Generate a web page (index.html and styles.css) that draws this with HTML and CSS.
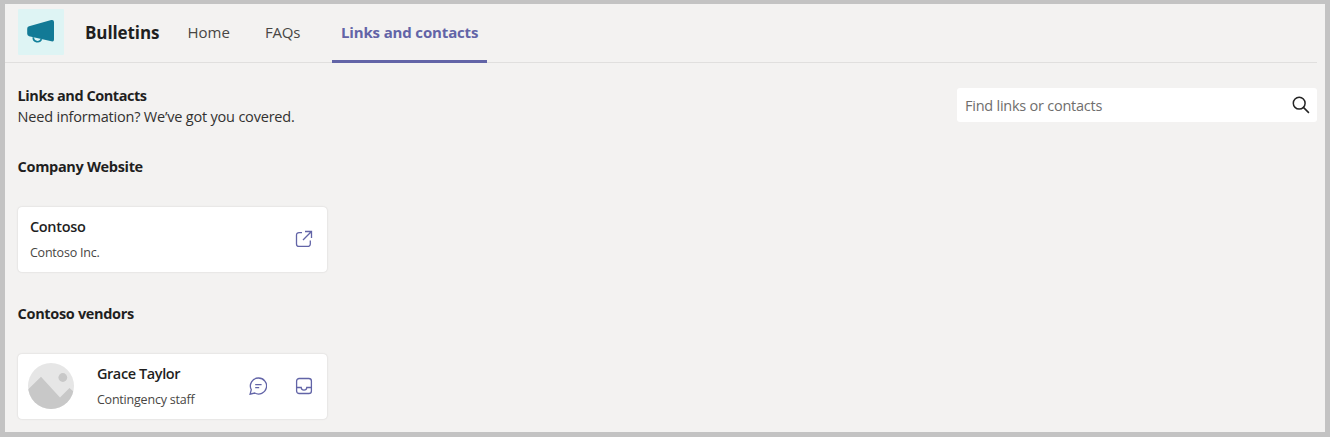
FILE: index.html
```
<!DOCTYPE html>
<html lang="en">
<head>
<meta charset="utf-8">
<title>Bulletins</title>
<link rel="stylesheet" href="styles.css">
</head>
<body>
<div class="app">
  <header class="header">
    <svg class="logo" viewBox="0 0 46 46">
      <rect width="46" height="46" rx="1" fill="#def4f4"/>
      <path d="M15.3 28.200a4.300 4.300 0 0 0 8.200 2" fill="none" stroke="#12809b" stroke-width="1.7"/>
      <path d="M11.100 17.300 33.200 11.100Q36 10.500 36 13V30.600Q36 33 33.400 32.300L11.100 27.200Q9.200 26.700 9.200 24.800V19.700Q9.200 17.800 11.100 17.300Z" fill="#127a96"/>
    </svg>
    <h1 class="brand">Bulletins</h1>
    <nav class="tabs">
      <a class="tab tab-home">Home</a>
      <a class="tab tab-faqs">FAQs</a>
      <a class="tab tab-active"><span>Links and contacts</span></a>
    </nav>
  </header>
  <main class="main">
    <div class="intro">
      <div>
        <h2 class="heading heading-intro">Links and Contacts</h2>
        <p class="lead">Need information? We’ve got you covered.</p>
      </div>
      <div class="search">
        <span class="placeholder">Find links or contacts</span>
        <svg class="search-icon" viewBox="0 0 18 18" fill="none" stroke="#242424" stroke-width="1.5"><circle cx="7.200" cy="7.200" r="5.900"/><path d="m11.400 11.400 5.500 5.500"/></svg>
      </div>
    </div>
    <section class="section">
      <h2 class="heading">Company Website</h2>
      <article class="card">
        <div class="info">
          <h3 class="name name-company">Contoso</h3>
          <p class="detail">Contoso Inc.</p>
        </div>
        <svg class="icon" viewBox="0 0 18 18"><path d="M7 2.600H4A2.500 2.500 0 0 0 1.500 5.100V13.900A2.500 2.500 0 0 0 4 16.400H12.800A2.500 2.500 0 0 0 15.300 13.900V10.500M10 1.500H16.500V8M16.200 1.800 8 10"/></svg>
      </article>
    </section>
    <section class="section">
      <h2 class="heading">Contoso vendors</h2>
      <article class="card">
        <svg class="avatar" viewBox="0 0 46 46">
          <defs><clipPath id="avatar-clip"><circle cx="23" cy="23" r="23"/></clipPath></defs>
          <g clip-path="url(#avatar-clip)">
            <rect width="46" height="46" fill="#e6e6e6"/>
            <path d="M0 26.500 13 13.700 32 34.500 41.500 25 46 29V46H0Z" fill="#c8c8c8"/>
            <circle cx="34.800" cy="14.500" r="4.400" fill="#c8c8c8"/>
          </g>
        </svg>
        <div class="info">
          <h3 class="name">Grace Taylor</h3>
          <p class="detail">Contingency staff</p>
        </div>
        <svg class="icon icon-chat" viewBox="0 0 18 18"><path d="M9.500 1A8 8 0 1 1 5.700 16L1.100 17.200 2.300 12.700A8 8 0 0 1 9.500 1ZM6.200 7.600H12.600M6.200 10.600H10.200"/></svg>
        <svg class="icon" viewBox="0 0 18 18"><rect x="1.600" y="1.500" width="14.800" height="15" rx="2.600"/><path d="M1.800 10.500H6.200C6.500 14 11.500 14 11.800 10.500H16.300"/></svg>
      </article>
    </section>
  </main>
</div>
</body>
</html>
```
FILE: styles.css
```
* { box-sizing: border-box; }
body {
  margin: 0;
  font-family: "Open Sans", "Noto Sans", sans-serif;
  color: #1f1f1f;
}
h1, h2, h3, p { margin: 0; }
svg { display: block; flex: none; }
.app {
  height: 437px;
  border: 5px solid #c3c3c3;
  border-top-width: 4px;
  background: #f3f2f1;
  overflow: hidden;
}
.header {
  display: flex;
  height: 59px;
  margin-right: 8px;
  padding-left: 13px;
  border-bottom: 1px solid #e0dfde;
}
.logo { width: 46px; height: 46px; margin-top: 5px; }
.brand {
  width: 123.500px;
  flex: none;
  padding-left: 21px;
  font-size: 17px;
  line-height: 57px;
  font-weight: 700;
  letter-spacing: -0.1px;
  white-space: nowrap;
}
.tabs { display: flex; height: 59px; }
.tab {
  font-size: 15px;
  line-height: 57px;
  color: #484644;
  white-space: nowrap;
}
.tab-home { width: 77.500px; }
.tab-faqs { width: 67px; letter-spacing: -0.2px; }
.tab-active {
  width: 155px;
  padding-left: 9px;
  border-bottom: 3px solid #6264a7;
  color: #6264a7;
  font-weight: 700;
  letter-spacing: -0.15px;
}
.main { padding: 22px 8px 0 12.600px; }
.intro { display: flex; justify-content: space-between; height: 71px; }
.heading { font-size: 14.500px; line-height: 21px; font-weight: 700; letter-spacing: -0.33px; }
.heading-intro { letter-spacing: -0.45px; }
.lead { font-size: 14.500px; line-height: 21px; color: #323130; letter-spacing: -0.2px; }
.search {
  display: flex;
  align-items: center;
  justify-content: space-between;
  width: 360px;
  height: 34px;
  margin-top: 3px;
  padding: 0 7.500px 0 8px;
  border-radius: 3px;
  background: #fff;
}
.placeholder { padding-top: 2px; font-size: 14.500px; line-height: 34px; color: #6f6e6d; letter-spacing: -0.24px; }
.search-icon { width: 18px; height: 18px; margin-bottom: 1px; }
.section { height: 147px; }
.card {
  display: flex;
  align-items: center;
  width: 309px;
  height: 65.500px;
  margin-top: 29.700px;
  padding: 0 13.500px 0 12.300px;
  border-radius: 4px;
  background: #fff;
  box-shadow: 0 0 2px rgba(0, 0, 0, 0.16);
}
.info { flex: 1; padding-top: 1px; }
.name { font-size: 14.500px; line-height: 26px; font-weight: 600; letter-spacing: -0.4px; }
.name-company { letter-spacing: -0.3px; }
.detail { font-size: 12.500px; line-height: 26px; color: #484644; letter-spacing: -0.2px; }
.avatar { width: 46px; height: 46px; margin: 0 23px 0 -2px; }
.icon { width: 18px; height: 18px; fill: none; stroke: #6264a7; stroke-width: 1.3; }
.icon-chat { margin-right: 28.500px; }
```
